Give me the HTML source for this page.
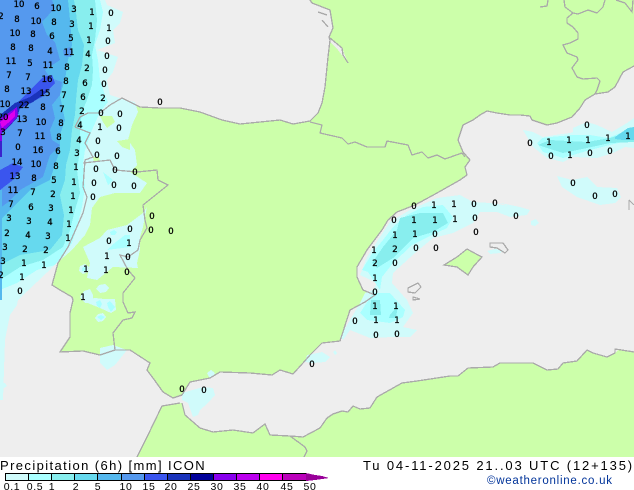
<!DOCTYPE html>
<html><head><meta charset="utf-8"><style>
html,body{margin:0;padding:0;background:#fff}
#w{position:relative;width:634px;height:490px;overflow:hidden;background:#fff;font-family:"Liberation Sans",sans-serif}
svg{position:absolute;left:0;top:0}
.n text{font:8.5px "DejaVu Sans",sans-serif;text-anchor:middle;fill:#000;stroke:#000;stroke-width:.3px}
.t{position:absolute;white-space:nowrap;color:#000;line-height:1}
.l{position:absolute;top:482px;font-size:10.5px;line-height:1;transform:translateX(-50%);letter-spacing:.6px;color:#000}
.c{position:absolute;top:473px;height:8px;box-sizing:border-box;border:1px solid #000;border-right:0}
</style></head><body><div id="w">
<svg width="634" height="457" viewBox="0 0 634 457" shape-rendering="crispEdges">
<rect width="634" height="457" fill="#eeeeee"/>
<g fill="#ccffaa">
<polygon points="75,127 80,117 88,113 100,113 110,105 122,98 140,107 160,108 180,108 200,112 222,120 240,124 260,122 280,120 293,124 310,121 318,113 322,103 325,87 328,57 330,40 329,37 333,28 330,10 312,3 310,0 634,0 634,66 623,72 615,87 608,92 595,94 585,100 580,108 572,117 557,123 547,125 532,120 530,116 520,115 510,115 497,113 487,111 480,115 473,120 463,125 458,140 463,152 470,160 465,167 467,175 460,180 437,193 415,205 397,212 388,220 382,230 367,250 357,267 357,277 363,290 375,295 365,302 350,310 340,341 322,343 310,355 303,363 293,374 280,370 272,375 250,373 220,372 210,378 190,382 182,395 173,398 163,392 153,378 147,370 150,363 130,350 115,350 100,355 83,351 60,352 70,337 70,313 73,300 72,297 60,290 52,285 58,263 68,247 83,213 87,197 83,187 85,160 93,157 85,143 90,133"/>
<polygon points="137,457 147,437 162,406 180,403 182,403 185,415 200,428 213,432 233,430 253,433 265,424 270,435 290,436 303,437 320,428 327,418 333,414 342,411 348,412 353,406 360,409 370,408 377,397 402,383 417,381 450,376 458,376 468,368 493,367 500,363 533,363 547,370 558,369 563,363 577,361 587,350 593,353 607,357 615,353 618,350 634,352 634,457"/>
<polygon points="444,265 457,257 467,249 478,255 482,257 473,267 468,275 457,267"/>
</g>
<polygon points="330,38 342,48 348,63 344,58 338,50 330,42" fill="#eeeeee"/>
<!-- 0.1 -->
<g fill="#d0fbfb">
<polygon points="0,0 105,0 107,5 123,12 120,23 113,30 115,43 97,50 118,57 113,72 107,80 110,95 125,100 135,102 138,112 132,125 128,140 135,150 137,165 130,172 147,183 140,193 115,193 100,197 92,208 90,225 85,235 72,250 57,263 37,282 18,300 17,305 10,315 5,340 3,400 0,400"/>
<polygon points="107,230 127,225 143,213 147,207 143,227 140,237 140,250 137,263 138,268 113,267 97,280 87,278 90,263 83,247 100,238"/>
<polygon points="80,266 85,264 89,267 88,272 83,274 79,271"/>
<polygon points="99,285 105,284 109,288 106,292 100,293 96,289"/>
<polygon points="84,291 90,289 93,295 93,303 85,303 80,297"/>
<polygon points="83,300 95,298 104,299 115,299 116,310 111,313 100,308 90,304"/>
<polygon points="98,314 103,313 106,317 103,321 98,322 95,318"/>
<polygon points="100,348 113,345 127,350 115,365 107,370 100,363"/>
<polygon points="182,393 203,387 213,388 215,395 208,403 200,410 198,415 193,417 188,403 182,400"/>
<polygon points="207,373 211,370 215,373 213,377 209,377"/>
<polygon points="307,355 322,352 330,357 325,362 313,363 305,362"/>
<polygon points="333,352 335,350 337,353 335,355"/>
<polygon points="0,383 5,383 7,386 4,388 0,388"/>
<polygon points="340,337 350,320 360,303 365,293 373,290 377,283 360,275 367,257 380,237 390,222 410,210 437,198 460,195 473,202 490,203 517,207 530,210 527,215 510,217 497,212 480,212 473,223 453,233 433,238 415,253 393,273 392,283 407,300 413,313 403,327 417,330 410,337 393,337 370,338 350,330 343,340"/>
<polygon points="531,221 536,219 539,223 535,226 531,225"/>
<polygon points="487,251 495,249 503,250 500,253 490,254"/>
<polygon points="523,130 533,132 543,137 555,135 570,133 573,132 573,128 587,122 597,125 612,132 627,123 634,118 634,148 625,147 613,153 597,158 573,157 563,162 547,158 533,147"/>
<polygon points="557,176 572,180 587,177 597,187 617,188 621,197 615,203 600,205 577,197 562,187"/>
<polygon points="500,203 520,207 530,210 520,210"/>
</g>
<g fill="#ccffaa">
<polygon points="100,116 112,116 115,122 107,128 103,122"/>
<polygon points="117,141 130,139 130,150 122,147"/>
<polygon points="93,157 99,157 100,162 94,162"/>
</g>
<!-- 0.5 -->
<g fill="#aaffff">
<polygon points="0,0 100,0 103,12 100,30 95,45 98,60 100,80 105,95 108,102 100,112 92,130 85,150 83,163 85,187 82,207 77,227 72,243 55,265 37,270 17,283 0,290"/>
<polygon points="103,172 113,180 108,185"/>
<polygon points="110,232 114,230 117,232 115,235 111,235"/>
<polygon points="125,235 130,235 130,247 107,250 112,245"/>
<polygon points="82,268 85,266 87,269 85,272 82,271"/>
<polygon points="96,302 100,300 102,304 100,308 97,306"/>
<polygon points="107,303 110,301 115,307 111,312 108,307"/>
<polygon points="97,317 101,315 105,317 101,320"/>
<polygon points="362,270 373,252 383,240 393,227 407,215 423,207 443,205 453,217 447,228 428,237 412,245 393,263 382,277 380,290 368,272"/>
<polygon points="373,293 390,293 405,310 403,317 390,323 367,320 360,313"/>
<polygon points="537,143 542,138 550,137 573,135 590,135 608,138 628,130 634,127 634,142 623,142 610,145 590,150 573,155 563,158 543,152"/>
</g>
<!-- 1 -->
<g fill="#88eeee">
<polygon points="0,0 95,0 97,20 95,40 92,55 93,70 92,85 87,100 82,112 80,130 80,150 77,170 80,193 75,210 70,230 63,247 43,260 20,267 0,280"/>
<polygon points="372,263 383,247 397,230 400,218 420,213 443,213 448,223 433,232 413,238 393,258 377,268"/>
<polygon points="371,300 380,300 381,315 370,315"/>
<polygon points="390,315 398,305 396,318 389,318"/>
<polygon points="538,145 550,140 587,142 610,138 634,130 634,142 610,143 587,148 563,153 547,148"/>
</g>
<!-- 2 -->
<g fill="#66d9ee">
<polygon points="0,0 74,0 76,12 78,30 84,45 82,65 78,80 76,100 75,115 72,130 70,150 66,165 65,180 60,195 64,215 62,235 50,250 20,255 0,265"/>
<polygon points="615,137 628,128 634,127 634,140 623,140 615,139"/>
</g>
<!-- 5 -->
<polygon fill="#55b8ee" points="0,0 68,0 70,20 72,45 68,60 65,80 60,95 65,120 60,135 60,150 55,165 50,180 30,190 15,205 0,220"/>
<!-- 10 -->
<g fill="#5599ee">
<polygon points="0,0 52,0 55,8 42,22 47,35 55,42 60,60 45,70 50,78 62,82 60,95 52,105 55,118 50,130 52,140 60,145 50,155 43,177 20,190 7,203 0,208"/>
<polygon points="63,50 70,47 73,52 71,57 64,56"/>
</g>
<!-- 15 -->
<g fill="#3a55ee">
<polygon points="43,77 52,75 55,83 42,97 30,103 18,110 0,133 0,120 13,107 28,92"/>
<polygon points="0,170 13,163 23,167 13,180 0,190"/>
</g>
<!-- 20 -->
<polygon fill="#1a33bb" points="40,90 47,92 33,102 20,108 17,118 8,128 0,135 0,115 15,103 30,97"/>
<!-- 30+ -->
<polygon fill="#8800ee" points="17,107 18,116 9,126 0,134 0,119 7,114"/>
<polygon fill="#dd00ee" points="15,110 15,116 8,123 2,128 0,122 8,116"/>
<rect x="0" y="133" width="2" height="24" fill="#3a22cc"/>
<rect x="0" y="133" width="2" height="8" fill="#8800ee"/>
<rect x="0" y="190" width="2" height="110" fill="#55b8ee"/>
<g fill="none" stroke="#aaaaaa" stroke-width="1.3">
<polyline points="75,127 80,117 88,113 100,113 110,105 122,98 140,107 160,108 180,108 200,112 222,120 240,124 260,122 280,120 293,124 310,121 318,113 322,103 325,87 328,57 330,40 329,37 333,28 330,10 312,3 310,0"/>
<polyline points="330,38 342,48 343,55 348,63"/><polyline points="318,12 327,15"/><polyline points="322,20 328,27"/>
<polyline points="634,66 623,72 615,87 608,92 595,94 585,100 580,108 572,117 557,123 547,125 532,120 530,116 520,115 510,115 497,113 487,111 480,115 473,120 463,125 458,140 463,152 470,160 465,167 467,175 460,180 437,193 415,205 397,212 388,220 382,230 367,250 357,267 357,277 363,290 375,295 365,302 350,310 340,341 322,343 310,355 303,363 293,374 280,370 272,375 250,373 220,372 210,378 190,382 182,395 173,398 163,392 153,378 147,370 150,363 130,350 115,350 100,355 83,351 60,352 70,337 70,313 73,300 72,297 60,290 52,285 58,263 68,247 83,213 87,197 83,187 85,160 93,157 85,143 90,133 75,127"/>
<polyline points="137,457 147,437 162,406 180,403"/>
<polyline points="182,403 185,415 200,428 213,432 233,430 253,433 265,424 270,435 290,436 303,437 320,428 327,418 333,414 342,411 348,412 353,406 360,409 370,408 377,397 402,383 417,381 450,376 458,376 468,368 493,367 500,363 533,363 547,370 558,369 563,363 577,361 587,350 593,353 607,357 615,353 615,349 634,352"/>
<polyline points="290,436 305,447 307,451 304,457"/>
<polyline points="310,122 322,125 320,133 342,138 348,144 355,142 367,147 385,147 387,141 408,145 412,155 422,152 428,158 437,155 445,159 462,153 465,157"/>
<polyline points="83,163 110,160 115,170 137,172 157,170 158,180 168,185 143,205 145,220 147,228 140,240 138,250 128,257 120,255 128,270 135,278 123,293 123,302 128,313 135,312 132,318 123,320 113,333 115,350"/>
<polygon points="444,265 457,257 467,249 478,255 482,257 473,267 468,275 457,267"/>
<polygon points="490,243 503,243 508,250 505,253 497,248 490,247"/>
<polygon points="408,288 418,283 421,287 415,293 408,292"/>
<polygon points="413,297 420,299 413,300"/>
<polyline points="564,0 565,7 573,13 578,14 588,10 597,13 603,7 605,0"/>
<polyline points="573,13 567,18 567,23 573,27 578,33 578,39 570,43 563,45 567,53 577,57 578,60 572,68 577,77 583,79 597,78 600,81 597,90 595,94"/>
<polyline points="616,0 625,3 632,12 633,0"/>
<polyline points="540,7 547,6 548,0"/>
<polyline points="629,200 629,210"/><polyline points="629,200 634,205"/>
</g>
<g class="n" shape-rendering="auto">
<text x="19" y="7">10</text><text x="37" y="9">6</text><text x="56" y="11">10</text><text x="74" y="12">3</text><text x="92" y="15">1</text><text x="111" y="16">0</text>
<text x="1" y="19">2</text><text x="17" y="22">8</text><text x="36" y="24">10</text><text x="54" y="25">8</text><text x="72" y="27">3</text><text x="91" y="29">1</text><text x="109" y="31">1</text>
<text x="15" y="36">10</text><text x="33" y="37">8</text><text x="52" y="39">6</text><text x="71" y="41">5</text><text x="89" y="43">1</text><text x="108" y="44">0</text>
<text x="13" y="50">8</text><text x="31" y="51">8</text><text x="50" y="54">4</text><text x="69" y="55">11</text><text x="88" y="57">4</text><text x="107" y="59">0</text>
<text x="11" y="64">11</text><text x="30" y="66">5</text><text x="48" y="68">11</text><text x="67" y="70">8</text><text x="87" y="71">2</text><text x="105" y="73">0</text>
<text x="9" y="78">7</text><text x="28" y="80">7</text><text x="47" y="82">16</text><text x="66" y="84">8</text><text x="85" y="86">6</text><text x="104" y="87">0</text>
<text x="7" y="92">8</text><text x="26" y="94">13</text><text x="45" y="96">15</text><text x="64" y="98">7</text><text x="83" y="100">6</text><text x="103" y="101">2</text>
<text x="5" y="107">10</text><text x="24" y="108">22</text><text x="43" y="110">8</text><text x="62" y="112">7</text><text x="82" y="114">2</text><text x="101" y="116">0</text><text x="120" y="117">0</text>
<text x="3" y="120">20</text><text x="22" y="122">13</text><text x="41" y="125">10</text><text x="61" y="126">8</text><text x="80" y="128">4</text><text x="100" y="130">1</text><text x="119" y="131">0</text>
<text x="3" y="135">3</text><text x="20" y="136">7</text><text x="40" y="139">11</text><text x="59" y="140">8</text><text x="79" y="143">4</text><text x="98" y="144">0</text>
<text x="18" y="150">0</text><text x="38" y="153">16</text><text x="58" y="154">6</text><text x="77" y="156">3</text><text x="97" y="158">0</text><text x="117" y="159">0</text>
<text x="160" y="105">0</text>
<text x="17" y="165">14</text><text x="36" y="167">10</text><text x="56" y="169">8</text><text x="76" y="170">1</text><text x="96" y="172">0</text><text x="115" y="173">0</text><text x="135" y="175">0</text>
<text x="15" y="179">13</text><text x="34" y="181">8</text><text x="54" y="183">5</text><text x="74" y="185">1</text><text x="94" y="186">0</text><text x="114" y="188">0</text><text x="134" y="189">0</text>
<text x="13" y="193">11</text><text x="33" y="195">7</text><text x="53" y="197">2</text><text x="73" y="199">1</text><text x="93" y="200">0</text>
<text x="11" y="207">7</text><text x="31" y="210">6</text><text x="51" y="211">3</text><text x="71" y="213">1</text>
<text x="9" y="221">3</text><text x="29" y="224">3</text><text x="50" y="225">4</text><text x="69" y="227">1</text><text x="152" y="219">0</text>
<text x="7" y="236">2</text><text x="28" y="238">4</text><text x="48" y="239">3</text><text x="68" y="241">1</text><text x="130" y="232">0</text><text x="151" y="233">0</text><text x="171" y="234">0</text>
<text x="5" y="250">3</text><text x="25" y="252">2</text><text x="46" y="253">2</text><text x="109" y="244">0</text><text x="129" y="246">1</text>
<text x="3" y="264">3</text><text x="24" y="266">1</text><text x="44" y="268">1</text><text x="107" y="259">1</text><text x="128" y="260">0</text>
<text x="1" y="278">2</text><text x="22" y="280">1</text><text x="86" y="272">1</text><text x="106" y="273">1</text><text x="127" y="275">0</text>
<text x="20" y="294">0</text><text x="83" y="300">1</text>
<text x="182" y="392">0</text><text x="204" y="393">0</text><text x="312" y="367">0</text>
<text x="414" y="209">0</text><text x="434" y="208">1</text><text x="454" y="207">1</text><text x="474" y="207">0</text><text x="495" y="206">0</text><text x="516" y="219">0</text>
<text x="394" y="223">0</text><text x="414" y="223">1</text><text x="435" y="223">1</text><text x="455" y="222">1</text><text x="475" y="221">0</text>
<text x="395" y="238">1</text><text x="415" y="237">1</text><text x="435" y="237">0</text><text x="476" y="235">0</text>
<text x="374" y="253">1</text><text x="395" y="252">2</text><text x="416" y="251">0</text><text x="436" y="251">0</text>
<text x="375" y="266">2</text><text x="395" y="266">0</text><text x="375" y="281">1</text><text x="375" y="295">0</text>
<text x="375" y="309">1</text><text x="396" y="309">1</text>
<text x="355" y="324">0</text><text x="376" y="323">1</text><text x="397" y="323">1</text>
<text x="376" y="338">0</text><text x="397" y="337">0</text>
<text x="587" y="128">0</text><text x="530" y="146">0</text><text x="549" y="145">1</text><text x="569" y="143">1</text><text x="588" y="143">1</text><text x="608" y="141">1</text><text x="628" y="139">1</text>
<text x="551" y="159">0</text><text x="570" y="158">1</text><text x="590" y="156">0</text><text x="610" y="154">0</text>
<text x="573" y="186">0</text><text x="595" y="199">0</text><text x="615" y="197">0</text>
</g>
</svg>
<div class="t" style="left:0;top:459px;font-size:13px;letter-spacing:1.4px">Precipitation (6h) [mm] ICON</div>
<div class="t" style="left:363px;top:459px;font-size:13px;letter-spacing:1.85px">Tu 04-11-2025 21..03 UTC (12+135)</div>
<div class="t" style="left:487px;top:476px;font-size:11.5px;letter-spacing:.75px;color:#003399">©weatheronline.co.uk</div>
<div class="c" style="left:5px;width:24px;background:#d0fbfb"></div>
<div class="c" style="left:28px;width:24px;background:#aaffff"></div>
<div class="c" style="left:51px;width:24px;background:#88eeee"></div>
<div class="c" style="left:74px;width:24px;background:#66d9ee"></div>
<div class="c" style="left:97px;width:25px;background:#55b8ee"></div>
<div class="c" style="left:121px;width:24px;background:#5599ee"></div>
<div class="c" style="left:144px;width:24px;background:#3a55ee"></div>
<div class="c" style="left:167px;width:24px;background:#1a33bb"></div>
<div class="c" style="left:190px;width:24px;background:#000099"></div>
<div class="c" style="left:213px;width:24px;background:#8800ee"></div>
<div class="c" style="left:236px;width:24px;background:#bb00ee"></div>
<div class="c" style="left:259px;width:24px;background:#ff00ee"></div>
<div class="c" style="left:282px;width:25px;background:#bb00bb;border-right:1px solid #000"></div>
<svg width="634" height="490" viewBox="0 0 634 490" shape-rendering="crispEdges" style="pointer-events:none"><polygon points="306,473 315,475 322,476 329,478 322,479 315,480 306,481" fill="#990099"/></svg>
<div class="l" style="left:12px">0.1</div><div class="l" style="left:35px">0.5</div><div class="l" style="left:52px">1</div><div class="l" style="left:76px">2</div><div class="l" style="left:98px">5</div><div class="l" style="left:126px">10</div><div class="l" style="left:149px">15</div><div class="l" style="left:171px">20</div><div class="l" style="left:194px">25</div><div class="l" style="left:217px">30</div><div class="l" style="left:240px">35</div><div class="l" style="left:263px">40</div><div class="l" style="left:287px">45</div><div class="l" style="left:310px">50</div>
</div></body></html>
